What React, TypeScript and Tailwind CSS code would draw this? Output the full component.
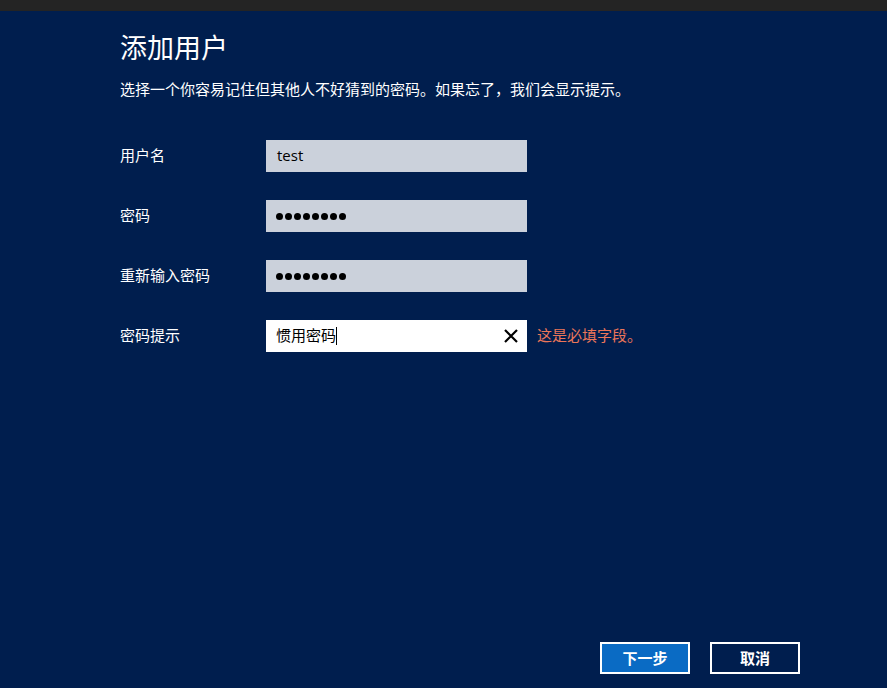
import React from 'react';

const font = { fontFamily: '"Noto Sans CJK SC", "Noto Sans", sans-serif' };

function Field({ label, children, extra }: { label: string; children: React.ReactNode; extra?: React.ReactNode }) {
    return (
        <div className="flex items-center h-8">
            <div className="w-[146px] text-[15px] text-white pb-[2px]">{label}</div>
            {children}
            {extra}
        </div>
    );
}

function Dots() {
    return (
        <div className="flex gap-[2px] items-center">
            {Array.from({ length: 8 }).map((_, i) => (
                <span key={i} className="w-[7px] h-[7px] rounded-full bg-black" />
            ))}
        </div>
    );
}

export default function App() {
    return (
        <div className="w-[887px] h-[688px] bg-[#001e4e] flex flex-col overflow-hidden" style={font}>
            <div className="h-[11px] bg-[#242424] shrink-0" />
            <div className="flex-1 flex flex-col pl-[120px]">
                <h1 className="text-[27px] leading-none text-white mt-[22px]">添加用户</h1>
                <p className="text-[15px] leading-none text-white mt-[21px]">
                    选择一个你容易记住但其他人不好猜到的密码。如果忘了，我们会显示提示。
                </p>

                <div className="flex flex-col gap-7 mt-[44px]">
                    <Field label="用户名">
                        <div className="w-[261px] h-8 bg-[#cbd1db] px-[11px] pb-[2px] flex items-center text-[15px] text-black" style={{ fontFamily: '"Open Sans", sans-serif' }}>
                            test
                        </div>
                    </Field>
                    <Field label="密码">
                        <div className="w-[261px] h-8 bg-[#cbd1db] px-[10px] flex items-center">
                            <Dots />
                        </div>
                    </Field>
                    <Field label="重新输入密码">
                        <div className="w-[261px] h-8 bg-[#cbd1db] px-[10px] flex items-center">
                            <Dots />
                        </div>
                    </Field>
                    <Field
                        label="密码提示"
                        extra={<span className="ml-[10px] text-[15px] text-[#ec7659] pb-[2px]">这是必填字段。</span>}
                    >
                        <div className="w-[261px] h-8 bg-white pl-[10px] pr-[9px] flex items-center text-[15px] text-black">
                            <span className="pb-[2px]">惯用密码</span>
                            <span className="w-px h-[18px] bg-black" />
                            <svg className="ml-auto" width="14" height="14" viewBox="0 0 14 14">
                                <path d="M1 1 L13 13 M13 1 L1 13" stroke="#000" strokeWidth="2.2" />
                            </svg>
                        </div>
                    </Field>
                </div>

                <div className="mt-auto mb-[14px] flex gap-5 pl-[480px]">
                    <button className="w-[90px] h-8 border-2 border-white bg-[#0a6bc4] text-white text-[15px] font-bold">下一步</button>
                    <button className="w-[90px] h-8 border-2 border-white bg-transparent text-white text-[15px] font-bold">取消</button>
                </div>
            </div>
        </div>
    );
}
